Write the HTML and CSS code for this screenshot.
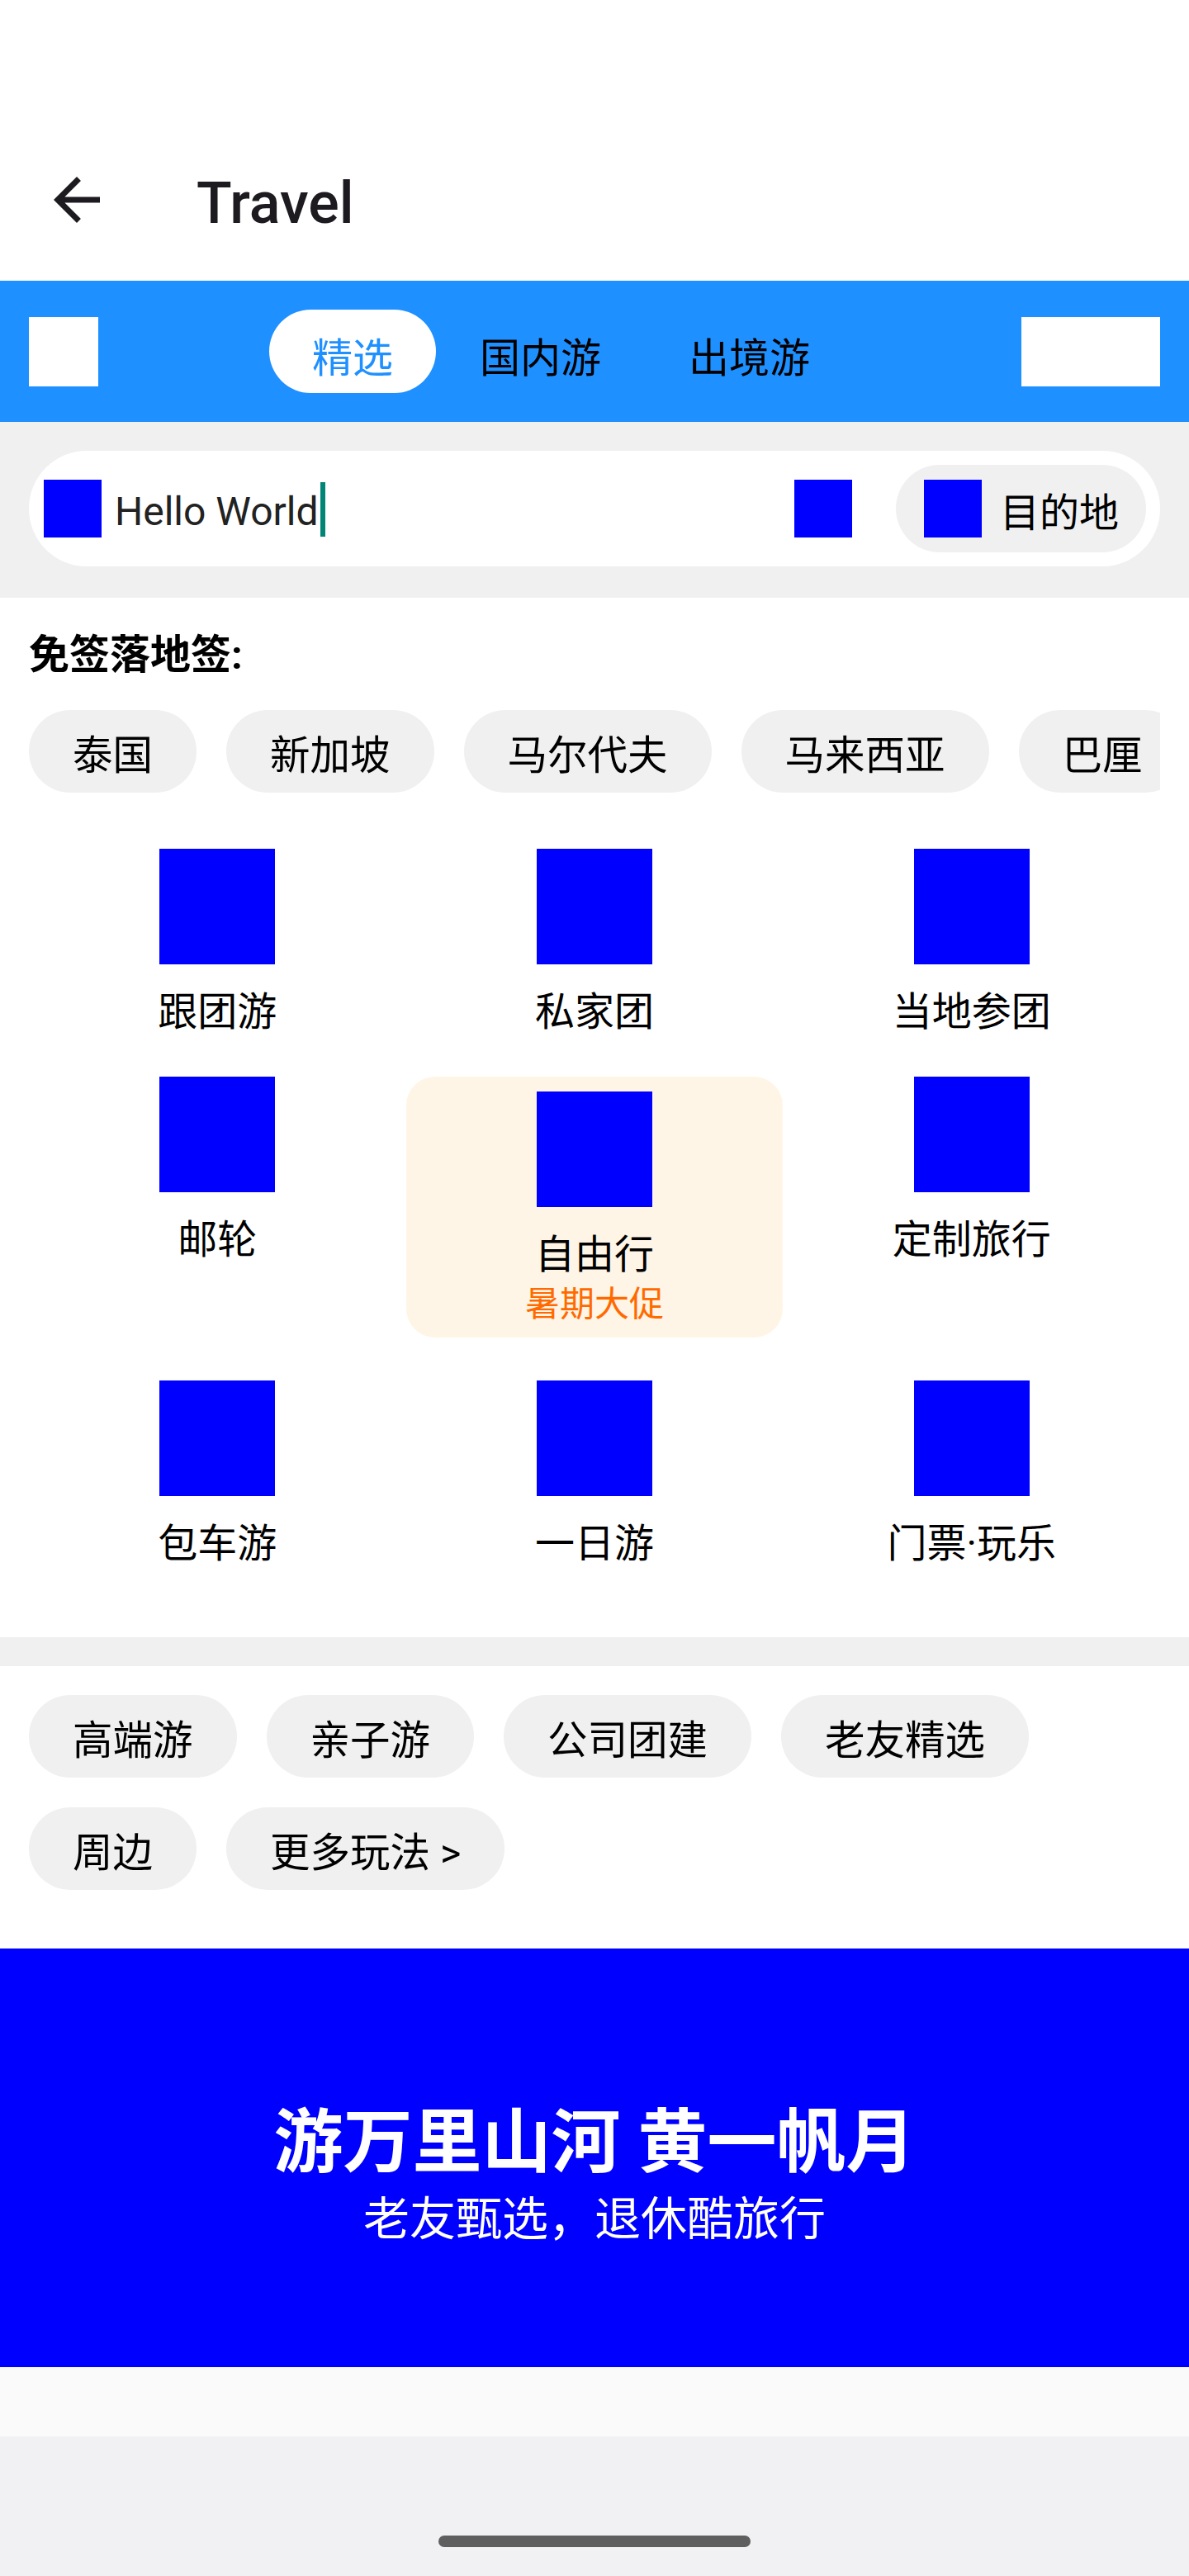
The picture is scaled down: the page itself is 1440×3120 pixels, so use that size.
FILE: index.html
```html
<!DOCTYPE html>
<html lang="zh-CN">
<head>
<meta charset="utf-8">
<title>Travel</title>
<link rel="stylesheet" href="styles.css">
</head>
<body>
<div class="page">
  <div class="statusbar"></div>
  <header class="toolbar">
    <svg class="back" viewBox="0 0 24 24" aria-hidden="true"><path d="M20 11H7.83l5.59-5.59L12 4l-8 8 8 8 1.41-1.41L7.83 13H20v-2z"/></svg>
    <h1 class="title">Travel</h1>
  </header>

  <nav class="tabbar">
    <div class="tab-left"></div>
    <div class="tabs">
      <span class="tab active">精选</span>
      <span class="tab">国内游</span>
      <span class="tab">出境游</span>
    </div>
    <div class="tab-right"></div>
  </nav>

  <section class="search-area">
    <div class="search">
      <div class="sq70"></div>
      <div class="query">Hello World<span class="caret"></span></div>
      <div class="sq70 scan"></div>
      <div class="dest"><div class="sq70"></div><span class="dest-text">目的地</span></div>
    </div>
  </section>

  <section class="main">
    <h2 class="visa-title">免签落地签:</h2>
    <div class="chip-scroll">
      <span class="chip">泰国</span>
      <span class="chip">新加坡</span>
      <span class="chip">马尔代夫</span>
      <span class="chip">马来西亚</span>
      <span class="chip">巴厘</span>
    </div>
    <div class="grid">
      <div class="cell"><div class="sq140"></div><div class="label">跟团游</div></div>
      <div class="cell"><div class="sq140"></div><div class="label">私家团</div></div>
      <div class="cell"><div class="sq140"></div><div class="label">当地参团</div></div>
      <div class="cell"><div class="sq140"></div><div class="label">邮轮</div></div>
      <div class="cell hot"><div class="sq140"></div><div class="label">自由行</div><div class="promo">暑期大促</div></div>
      <div class="cell"><div class="sq140"></div><div class="label">定制旅行</div></div>
      <div class="cell"><div class="sq140"></div><div class="label">包车游</div></div>
      <div class="cell"><div class="sq140"></div><div class="label">一日游</div></div>
      <div class="cell"><div class="sq140"></div><div class="label">门票·玩乐</div></div>
    </div>
  </section>

  <div class="divider"></div>

  <section class="themes">
    <span class="chip">高端游</span>
    <span class="chip">亲子游</span>
    <span class="chip">公司团建</span>
    <span class="chip">老友精选</span>
    <span class="chip">周边</span>
    <span class="chip">更多玩法 &gt;</span>
  </section>

  <section class="banner">
    <div class="banner-title">游万里山河 黄一帆月</div>
    <div class="banner-sub">老友甄选，退休酷旅行</div>
  </section>

  <div class="footer-light"></div>
  <div class="navbar"><div class="handle"></div></div>
</div>
</body>
</html>
```

FILE: styles.css
```css
* { box-sizing: border-box; }

html, body {
  margin: 0;
  padding: 0;
  background: #ffffff;
}

body {
  font-family: Roboto, "Noto Sans CJK SC", sans-serif;
  color: #000000;
}

.page {
  width: 1440px;
  overflow: hidden;
}

.statusbar {
  height: 144px;
  background: #ffffff;
}

/* Toolbar */
.toolbar {
  height: 196px;
  display: flex;
  align-items: center;
  padding-left: 51px;
  background: #ffffff;
}

.back {
  width: 84px;
  height: 84px;
  fill: #1d1b20;
  flex: none;
}

.title {
  margin: 0 0 0 103px;
  padding-top: 8px;
  font-family: Roboto, sans-serif;
  font-weight: 500;
  font-size: 70px;
  line-height: 82px;
  color: #1d1b20;
}

/* Tab bar */
.tabbar {
  height: 171px;
  background: #1e90ff;
  display: flex;
  align-items: center;
  padding: 0 35px;
}

.tab-left {
  width: 84px;
  height: 84px;
  background: #ffffff;
  flex: none;
}

.tabs {
  display: flex;
  align-items: center;
  margin-left: 207px;
}

.tab {
  height: 101px;
  padding: 18px 53px 0;
  border-radius: 51px;
  font-size: 49px;
  line-height: 83px;
  color: #000000;
  white-space: nowrap;
}

.tab.active {
  padding: 18px 52px 0;
  background: #ffffff;
  color: #1e90ff;
}

.tab-right {
  width: 168px;
  height: 84px;
  background: #ffffff;
  margin-left: auto;
  flex: none;
}

/* Search */
.search-area {
  background: #f0f0f0;
  padding: 35px 35px 38px;
}

.search {
  height: 140px;
  border-radius: 70px;
  background: #ffffff;
  display: flex;
  align-items: center;
  padding: 0 17px 0 18px;
}

.sq70 {
  width: 70px;
  height: 70px;
  background: #0000ff;
  flex: none;
}

.query {
  margin-left: 16px;
  padding-top: 4px;
  font-family: Roboto, sans-serif;
  font-size: 48px;
  line-height: 66px;
  color: #222222;
  white-space: nowrap;
}

.caret {
  display: inline-block;
  width: 6px;
  height: 66px;
  background: #008577;
  vertical-align: -14px;
  margin-left: 2px;
}

.scan {
  margin-left: auto;
}

.dest {
  margin-left: 53px;
  height: 106px;
  width: 303px;
  border-radius: 53px;
  background: #f0f0f0;
  display: flex;
  align-items: center;
  padding-left: 34px;
  flex: none;
}

.dest-text {
  margin-left: 22px;
  padding-top: 12px;
  font-size: 48px;
  line-height: 70px;
  color: #000000;
  white-space: nowrap;
}

/* Main section */
.main {
  padding: 35px 35px 78px;
  background: #ffffff;
}

.visa-title {
  margin: 0;
  font-size: 49px;
  font-weight: 700;
  line-height: 70px;
  color: #000000;
}

.chip-scroll {
  margin-top: 31px;
  display: flex;
  gap: 36px;
  overflow: hidden;
  white-space: nowrap;
}

.chip {
  flex: none;
  height: 100px;
  padding: 12px 53px 0;
  border-radius: 50px;
  background: #f0f0f0;
  font-size: 48.5px;
  line-height: 88px;
  color: #000000;
  white-space: nowrap;
}

.grid {
  margin-top: 68px;
  display: grid;
  grid-template-columns: repeat(3, 1fr);
  row-gap: 43px;
  align-items: start;
}

.cell {
  display: flex;
  flex-direction: column;
  align-items: center;
}

.sq140 {
  width: 140px;
  height: 140px;
  background: #0000ff;
  flex: none;
}

.label {
  margin-top: 23px;
  font-size: 48px;
  line-height: 70px;
  color: #000000;
  white-space: nowrap;
}

.cell.hot {
  background: #fff5e6;
  border-radius: 35px;
  padding: 18px 0 15px;
  margin-bottom: 9px;
}

.promo {
  font-size: 42px;
  line-height: 50px;
  color: #ff6a00;
  white-space: nowrap;
}

/* Divider */
.divider {
  height: 35px;
  background: #f0f0f0;
}

/* Themes */
.themes {
  padding: 35px 35px 71px;
  display: flex;
  flex-wrap: wrap;
  gap: 36px;
  background: #ffffff;
}

/* Banner */
.banner {
  height: 507px;
  padding-top: 186px;
  background: #0000ff;
  color: #ffffff;
  text-align: center;
}

.banner-title {
  font-size: 84px;
  font-weight: 700;
  line-height: 100px;
}

.banner-sub {
  margin-top: 10px;
  font-size: 56px;
  line-height: 64px;
}

/* Footer */
.footer-light {
  height: 84px;
  background: #fafafa;
}

.navbar {
  height: 169px;
  background: #f1f1f4;
  padding-top: 120px;
}

.handle {
  width: 378px;
  height: 14px;
  margin: 0 auto;
  border-radius: 7px;
  background: #5f5f5f;
}
```
